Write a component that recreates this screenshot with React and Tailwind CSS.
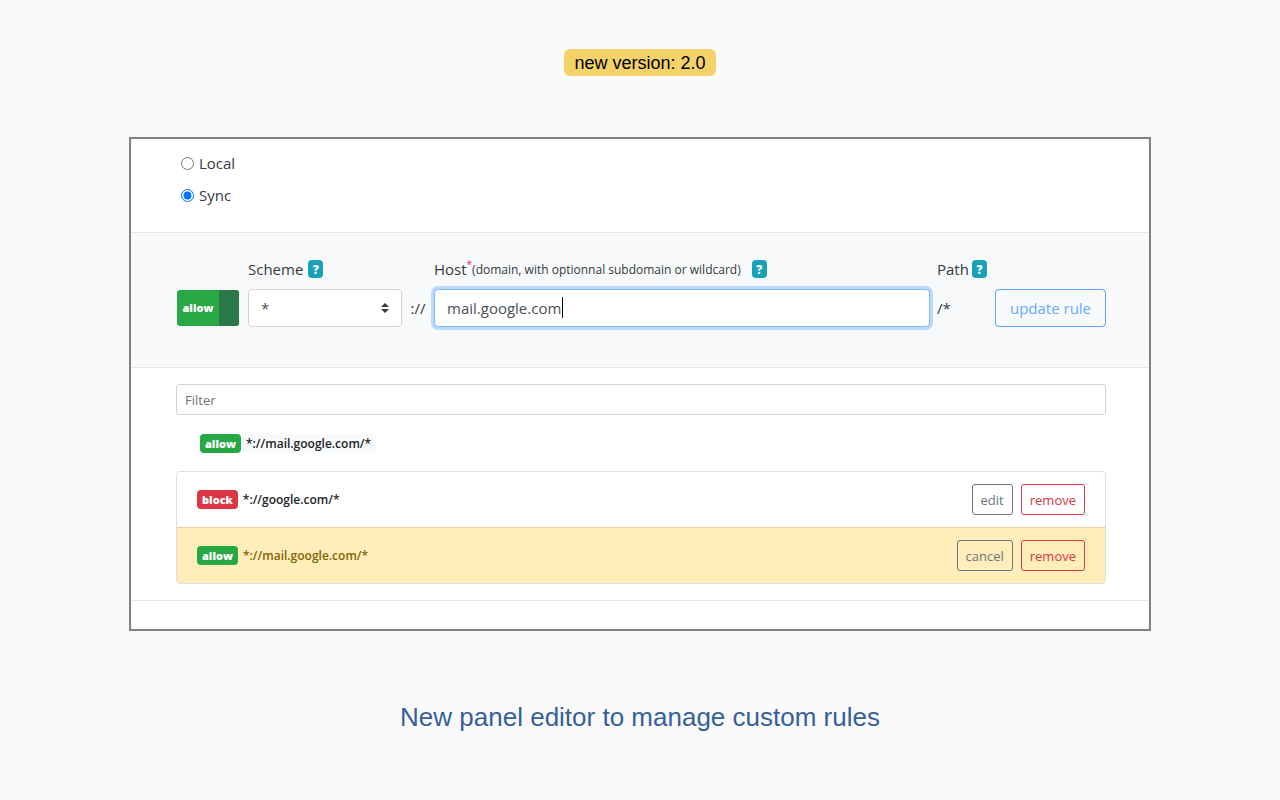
import { useState } from 'react';

const RULES = [
  { id: 1, type: 'block', pattern: '*://google.com/*' },
  { id: 2, type: 'allow', pattern: '*://mail.google.com/*' },
];

const Badge = ({ type }) => (
  <span className={`inline-block rounded px-[5px] pt-px text-[11px] leading-[18px] font-extrabold text-white ${type === 'allow' ? 'bg-[#28a745]' : 'bg-[#dc3545]'}`}>
    {type}
  </span>
);

const Help = ({ label, className = 'ml-[5px]' }) => (
  <button type="button" aria-label={label} className={`h-[18px] w-[15px] rounded bg-[#17a2b8] pt-px text-center text-xs leading-[17px] font-extrabold text-white ${className}`}>?</button>
);

const SmallBtn = ({ danger, children, onClick }) => (
  <button
    type="button"
    onClick={onClick}
    className={`h-[31px] rounded-[3px] border px-2 text-[13px] ${danger ? 'border-[#dc3545] text-[#dc3545]' : 'border-[#6c757d] text-[#6c757d]'}`}
  >
    {children}
  </button>
);

export default function App() {
  const [storage, setStorage] = useState('sync');
  const [allow, setAllow] = useState(true);
  const [host, setHost] = useState('mail.google.com');
  const [editing, setEditing] = useState(2);
  const [rules, setRules] = useState(RULES);
  const [filter, setFilter] = useState('');
  const type = allow ? 'allow' : 'block';

  return (
    <div className="flex min-h-screen flex-col items-center bg-[#fafafa] px-[129px] pt-[49px] font-['Liberation_Sans',sans-serif]">
      <p className="rounded-md bg-[#f2d269] px-[10px] pt-px text-lg leading-[26px] text-black">new version: 2.0</p>

      <main className="mt-[61px] w-full border-2 border-[#808080] bg-white font-['Open_Sans',sans-serif] text-[15px] leading-6 text-[#343a40]">
        {/* Storage */}
        <fieldset className="flex flex-col gap-2 border-b border-[#e4e7ea] px-[50px] pt-3 pb-[25px]">
          {['local', 'sync'].map((s) => (
            <label key={s} className="flex items-center gap-[5px]">
              <input type="radio" name="storage" checked={storage === s} onChange={() => setStorage(s)} className="h-[13px] w-[13px] accent-[#0075ff]" />
              <span className="capitalize">{s}</span>
            </label>
          ))}
        </fieldset>

        {/* Rule editor */}
        <form className="flex items-end border-b border-[#e4e7ea] bg-[#f8f9fa] pt-6 pr-[43px] pb-10 pl-[46px]" onSubmit={(e) => e.preventDefault()}>
          <button type="button" aria-pressed={allow} onClick={() => setAllow(!allow)} className="mb-px flex h-9 w-[62px] overflow-hidden rounded-[3px] bg-[#28a745] text-[11px] font-extrabold text-white">
            <span className="flex flex-1 items-center justify-center self-stretch">{type}</span>
            <span className="w-5 self-stretch bg-[#2a7947]" />
          </button>
          <div className="ml-[9px] w-[154px]">
            <div className="mb-2 flex items-center">
              <label htmlFor="scheme">Scheme</label>
              <Help label="Scheme help" />
            </div>
            <div className="relative">
              <select id="scheme" className="block h-[38px] w-full appearance-none rounded border border-[#ced4da] bg-white px-3 text-[#495057]">
                <option>*</option>
                <option>http</option>
                <option>https</option>
              </select>
              <svg viewBox="0 0 8 10" className="pointer-events-none absolute top-[14px] right-[13px] h-[10px] w-2" fill="#343a40">
                <path d="M4 0 0 4h8zM4 10 0 6h8z" />
              </svg>
            </div>
          </div>
          <span className="w-8 text-center leading-[38px]">://</span>
          <div className="min-w-0 flex-1">
            <div className="mb-2 flex items-center">
              <label htmlFor="host" className="flex items-center">
                Host<span className="self-start text-[10px] leading-[14px] text-[#dc3545]">*</span>
                <span className="pt-px text-xs leading-[23px]">(domain, with optionnal subdomain or wildcard)</span>
              </label>
              <Help label="Host help" className="ml-[11px]" />
            </div>
            <div className="relative">
              <input id="host" value={host} onChange={(e) => setHost(e.target.value)} className="block h-[38px] w-full rounded border border-[#80bdff] bg-white px-3 text-[#495057] caret-transparent ring-3 ring-[#b8daff] outline-none" />
              <span className="absolute top-2 left-32 h-[21px] w-px bg-black" />
            </div>
          </div>
          <div className="w-[65px] pl-[7px]">
            <div className="mb-2 flex items-center">
              Path
              <Help label="Path help" className="ml-[3px]" />
            </div>
            <div className="leading-[38px]">/*</div>
          </div>
          <button type="submit" className="h-[38px] w-[111px] rounded border border-[#59a6fa] text-[#66adff]">update rule</button>
        </form>

        {/* Rules */}
        <section className="border-b border-[#e4e7ea] pt-4 pr-[43px] pb-4 pl-[45px]">
          <input aria-label="Filter" placeholder="Filter" value={filter} onChange={(e) => setFilter(e.target.value)} className="block h-[31px] w-full rounded-[3px] border border-[#ced4da] px-2 text-[13px] placeholder:text-[#6c757d]" />
          <div className="flex items-center px-6 pt-[19px] pb-[18px] text-xs font-semibold text-[#212529]">
            <Badge type={type} />
            <span className="rounded bg-[#f8f9fa] px-[5px] pt-px leading-[18px]">*://{host}/*</span>
          </div>
          <ul className="overflow-hidden rounded border border-[#dfdfdf] text-[#212529]">
            {rules.filter((r) => r.pattern.includes(filter)).map((r) => (
              <li key={r.id} className={`flex h-14 items-center gap-2 border-t px-5 first:h-[55px] first:border-t-0 ${editing === r.id ? 'border-[#e3d3a3] bg-[#ffeeba] text-[#856404]' : 'border-[#dfdfdf]'}`}>
                <div className="flex flex-1 items-center gap-[5px] text-xs font-semibold">
                  <Badge type={r.type} />
                  <span className="pt-px leading-[18px]">{r.pattern}</span>
                </div>
                <SmallBtn onClick={() => setEditing(editing === r.id ? null : r.id)}>{editing === r.id ? 'cancel' : 'edit'}</SmallBtn>
                <SmallBtn danger onClick={() => setRules(rules.filter((x) => x.id !== r.id))}>remove</SmallBtn>
              </li>
            ))}
          </ul>
        </section>
        <div className="h-7" />
      </main>

      <h1 className="mt-[70px] text-[26px] leading-8 text-[#34609c]">New panel editor to manage custom rules</h1>
    </div>
  );
}
